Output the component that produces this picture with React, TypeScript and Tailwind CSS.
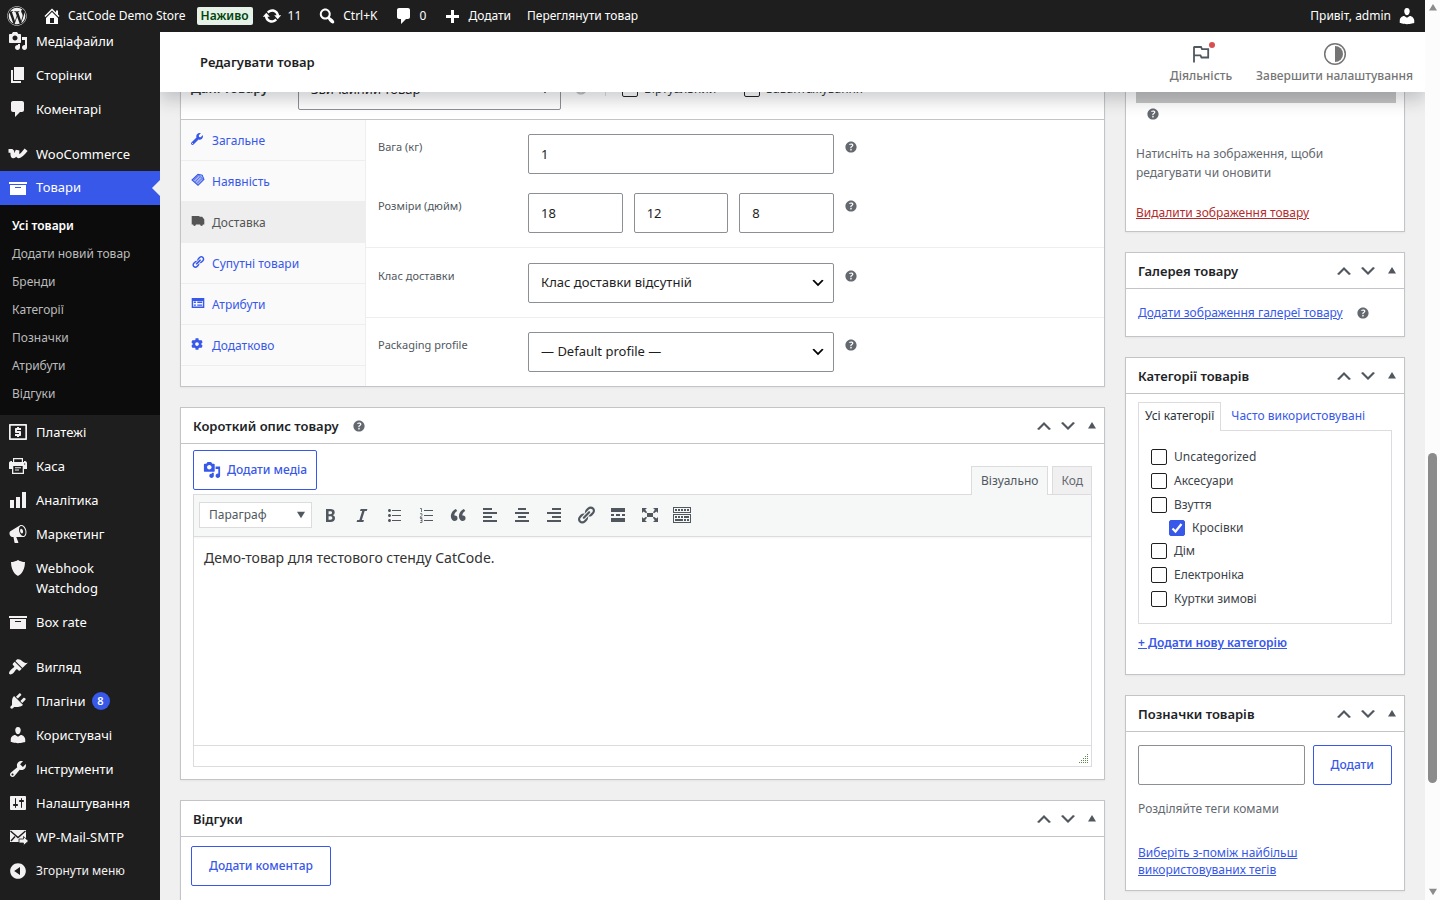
import { useState } from "react";
import type { ReactNode } from "react";
import clsx from "clsx";
import { FaCog, FaWordpress, FaWrench } from "react-icons/fa";

const ICONS = {
  media:
    "M13 11V4c0-.55-.45-1-1-1h-1.67L9 1H5L3.67 3H2c-.55 0-1 .45-1 1v7c0 .55.45 1 1 1h10c.55 0 1-.45 1-1zM7 4.5c1.38 0 2.5 1.12 2.5 2.5S8.38 9.5 7 9.5 4.5 8.38 4.5 7 5.62 4.5 7 4.5zM14 6h5v10.5c0 1.38-1.12 2.5-2.5 2.5S14 17.88 14 16.5s1.12-2.5 2.5-2.5c.17 0 .34.02.5.05V9h-3V6zm-4 8.05V13h2v3.5c0 1.38-1.12 2.5-2.5 2.5S7 17.88 7 16.5 8.12 14 9.5 14c.17 0 .34.02.5.05z",
  page: "M6 15V2h10v13H6zm-1 1h8v2H3V5h2v11z",
  comment:
    "M5 2h9c1.1 0 2 .9 2 2v7c0 1.1-.9 2-2 2h-2l-5 5v-5H5c-1.1 0-2-.9-2-2V4c0-1.1.9-2 2-2z",
  archive: "M19 4v2H1V4h18zM2 7h16v10H2V7zm11 3V9H7v1h6z",
  chart: "M18 18V2h-4v16h4zm-6 0V7H8v11h4zm-6 0v-8H2v8h4z",
  megaphone:
    "M18.15 5.94c.46 1.62.38 3.22-.02 4.48-.42 1.28-1.26 2.18-2.3 2.48-.16.06-.26.06-.4.06-.06.02-.12.02-.18.02-.06.02-.14.02-.22.02h-6.8l2.22 5.5c.02.14-.06.26-.14.34-.08.1-.24.16-.34.16H6.95c-.1 0-.26-.06-.34-.16-.08-.08-.16-.2-.14-.34l-1-5.5H4.25l-.02-.02c-.5.06-1.08-.18-1.54-.62s-.88-1.08-1.06-1.88c-.24-.8-.2-1.56-.02-2.2.18-.62.58-1.08 1.06-1.3l.02-.02 9-5.4c.1-.06.18-.1.24-.16.06-.04.14-.08.24-.12.16-.08.28-.12.5-.18 1.04-.3 2.24.1 3.22.98s1.84 2.24 2.26 3.86zm-2.58 5.98h-.02c.4-.1.74-.34 1.04-.7.58-.7.86-1.76.86-3.04 0-.64-.1-1.3-.28-1.98-.34-1.36-1.02-2.5-1.78-3.24s-1.68-1.1-2.46-.88c-.82.22-1.4.96-1.7 2-.32 1.04-.28 2.36.06 3.72.38 1.36 1 2.5 1.8 3.24.78.74 1.62 1.1 2.48.88zm-2.54-7.08c.22-.04.42-.02.62.04.38.16.76.48 1.02 1s.42 1.2.42 1.78c0 .3-.04.56-.12.8-.18.48-.44.84-.86.94-.34.1-.8-.06-1.14-.4s-.64-.86-.78-1.5c-.18-.62-.12-1.24.02-1.72s.48-.84.82-.94z",
  shield: "M10 2s3 2 7 2c0 11-7 14-7 14S3 15 3 4c4 0 7-2 7-2z",
  brush:
    "M14.48 11.06L7.41 3.99l1.5-1.5c.5-.56 2.3-.47 3.51.32 1.21.8 1.43 1.28 2.91 2.1 1.18.64 2.45 1.26 4.45.85zm-.71.71L6.7 4.7 4.93 6.47c-.39.39-.39 1.02 0 1.41l1.06 1.06c.39.39.39 1.03 0 1.42-.6.6-1.43 1.11-2.21 1.69-.35.26-.7.53-1.01.84C1.43 14.23.4 16.08 1.4 17.07c.99 1 2.84-.03 4.18-1.36.31-.31.58-.66.85-1.02.57-.78 1.08-1.61 1.69-2.21.39-.39 1.02-.39 1.41 0l1.06 1.06c.39.39 1.02.39 1.41 0z",
  plug: "M13.11 4.36L9.87 7.6 8 5.73l3.24-3.24c.35-.34 1.05-.2 1.56.32.52.51.66 1.21.31 1.55zm-8 1.77l.91-1.12 9.01 9.01-1.19.84c-.71.71-2.63 1.16-3.82 1.16H6.14L4.9 17.26c-.59.59-1.54.59-2.12 0-.59-.58-.59-1.53 0-2.12l1.24-1.24v-3.88c0-1.13.4-3.19 1.09-3.89zm7.26 3.97l3.24-3.24c.34-.35 1.04-.21 1.55.31.52.51.66 1.21.31 1.55l-3.24 3.25z",
  user: "M10 9.25c-2.27 0-2.73-3.44-2.73-3.44C7 4.02 7.82 2 9.97 2c2.16 0 2.98 2.02 2.71 3.81 0 0-.41 3.44-2.68 3.44zm0 2.57L12.72 10c2.39 0 4.52 2.33 4.52 4.53v2.49s-3.65 1.13-7.24 1.13c-3.65 0-7.24-1.13-7.24-1.13v-2.49c0-2.25 1.94-4.48 4.47-4.48z",
  tools:
    "M16.68 9.77c-1.34 1.34-3.3 1.67-4.95.99l-5.41 6.52c-.99.99-2.59.99-3.58 0s-.99-2.59 0-3.57l6.52-5.42c-.68-1.65-.35-3.61.99-4.95 1.28-1.28 3.12-1.62 4.72-1.06l-2.89 2.89 2.82 2.82 2.86-2.87c.53 1.58.18 3.39-1.08 4.65zM3.81 16.21c.4.39 1.04.39 1.43 0 .4-.4.4-1.04 0-1.43-.39-.4-1.03-.4-1.43 0-.39.39-.39 1.03 0 1.43z",
  settings:
    "M18 16V4c0-.55-.45-1-1-1H3c-.55 0-1 .45-1 1v12c0 .55.45 1 1 1h14c.55 0 1-.45 1-1zM8 11h1c.55 0 1 .45 1 1s-.45 1-1 1H8v1.5c0 .28-.22.5-.5.5s-.5-.22-.5-.5V13H6c-.55 0-1-.45-1-1s.45-1 1-1h1V5.5c0-.28.22-.5.5-.5s.5.22.5.5V11zm5-2h-1c-.55 0-1-.45-1-1s.45-1 1-1h1V5.5c0-.28.22-.5.5-.5s.5.22.5.5V7h1c.55 0 1 .45 1 1s-.45 1-1 1h-1v5.5c0 .28-.22.5-.5.5s-.5-.22-.5-.5V9z",
  collapse:
    "M10 2.16c4.33 0 7.84 3.51 7.84 7.84s-3.51 7.84-7.84 7.84S2.16 14.33 2.16 10 5.71 2.16 10 2.16zm2 11.72V6.12L6.18 9.97z",
  home: "M16 8.5l1.53 1.53-1.06 1.06L10 4.6l-6.47 6.49-1.06-1.06L10 2.5l4 4v-2h2v4zm-6-2.46l6 5.99V18H4v-5.97zM12 17v-5H8v5h4z",
  update:
    "M10.2 3.28c3.53 0 6.43 2.61 6.92 6h2.08l-3.5 4-3.5-4h2.32c-.45-1.97-2.21-3.45-4.32-3.45-1.45 0-2.73.71-3.54 1.78L4.95 5.66C6.23 4.2 8.11 3.28 10.2 3.28zm-.4 13.44c-3.52 0-6.43-2.61-6.92-6H.8l3.5-4c1.17 1.33 2.33 2.67 3.5 4H5.48c.45 1.97 2.21 3.45 4.32 3.45 1.45 0 2.73-.71 3.54-1.78l1.71 1.95c-1.28 1.46-3.15 2.38-5.25 2.38z",
  search:
    "M12.14 4.18c1.87 1.87 2.11 4.75.72 6.89.12.1.22.21.36.31.2.16.47.36.81.59.34.24.56.39.66.47.42.31.73.57.94.78.32.32.6.65.84 1 .25.35.44.69.59 1.04.14.35.21.68.18 1-.02.32-.14.59-.36.81s-.49.34-.81.36c-.31.02-.65-.04-.99-.19-.35-.14-.7-.34-1.04-.59-.35-.24-.68-.52-1-.84-.21-.21-.47-.52-.77-.93-.1-.13-.25-.35-.47-.66-.22-.32-.4-.57-.56-.78-.16-.2-.29-.35-.44-.5-2.07 1.09-4.69.76-6.44-.98-2.14-2.15-2.14-5.64 0-7.78 2.15-2.15 5.63-2.15 7.78 0zm-1.41 6.36c1.36-1.37 1.36-3.58 0-4.95-1.37-1.37-3.59-1.37-4.95 0-1.37 1.37-1.37 3.58 0 4.95 1.36 1.37 3.58 1.37 4.95 0z",
  plus: "M17 9v3h-5v5H9v-5H4V9h5V4h3v5h5z",
  bold: "M6 4v13h4.54c1.37 0 2.46-.33 3.26-1 .8-.66 1.2-1.58 1.2-2.77 0-.84-.17-1.51-.51-2.01s-.9-.85-1.67-1.03v-.09c.57-.1 1.02-.4 1.36-.9s.51-1.13.51-1.91c0-1.14-.39-1.98-1.17-2.5C12.75 4.26 11.5 4 9.78 4H6zm2.57 5.15V6.26h1.36c.73 0 1.27.11 1.61.32.34.22.51.58.51 1.07 0 .54-.16.92-.47 1.15s-.82.35-1.51.35h-1.5zm0 2.19h1.6c1.44 0 2.16.53 2.16 1.61 0 .6-.17 1.05-.51 1.34s-.86.43-1.57.43H8.57v-3.38z",
  italic: "M14.78 6h-2.13l-2.8 9h2.12l-.62 2H4.6l.62-2h2.14l2.8-9H8.03l.62-2h6.75z",
  ul: "M5.5 7C4.67 7 4 6.33 4 5.5 4 4.68 4.67 4 5.5 4 6.32 4 7 4.68 7 5.5 7 6.33 6.32 7 5.5 7zM8 5h9v1H8V5zm-2.5 7c-.83 0-1.5-.67-1.5-1.5C4 9.68 4.67 9 5.5 9c.82 0 1.5.68 1.5 1.5 0 .83-.68 1.5-1.5 1.5zM8 10h9v1H8v-1zm-2.5 7c-.83 0-1.5-.67-1.5-1.5 0-.82.67-1.5 1.5-1.5.82 0 1.5.68 1.5 1.5 0 .83-.68 1.5-1.5 1.5zM8 15h9v1H8v-1z",
  quote:
    "M9.49 13.22c0-.74-.2-1.38-.61-1.9-.62-.78-1.83-.88-2.53-.72-.29-1.65 1.11-3.75 2.92-4.65L7.88 4c-2.73 1.3-5.42 4.28-4.96 8.05C3.21 14.43 4.59 16 6.54 16c.85 0 1.56-.25 2.12-.75s.83-1.18.83-2.03zm8.05 0c0-.74-.2-1.38-.61-1.9-.63-.78-1.83-.88-2.53-.72-.29-1.65 1.11-3.75 2.92-4.65L15.93 4c-2.73 1.3-5.41 4.28-4.95 8.05.29 2.38 1.66 3.95 3.61 3.95.85 0 1.56-.25 2.12-.75s.83-1.18.83-2.03z",
  alignLeft: "M12 5V3H3v2h9zm5 4V7H3v2h14zm-5 4v-2H3v2h9zm5 4v-2H3v2h14z",
  alignCenter: "M14 5V3H6v2h8zm3 4V7H3v2h14zm-3 4v-2H6v2h8zm3 4v-2H3v2h14z",
  alignRight: "M17 5V3H8v2h9zm0 4V7H3v2h14zm0 4v-2H8v2h9zm0 4v-2H3v2h14z",
  link: "M17.74 2.76c1.68 1.69 1.68 4.41 0 6.1l-1.53 1.52c-1.12 1.12-2.7 1.47-4.14 1.09l2.62-2.61.76-.77.76-.76c.84-.84.84-2.2 0-3.04-.84-.85-2.2-.85-3.04 0l-.77.76-3.38 3.38c-.37-1.44-.02-3.02 1.1-4.14l1.52-1.53c1.69-1.68 4.42-1.68 6.1 0zM8.59 13.43l5.34-5.34c.42-.42.42-1.1 0-1.52-.44-.43-1.13-.39-1.53 0l-5.33 5.34c-.42.42-.42 1.1 0 1.52.44.43 1.13.39 1.52 0zm-.76 2.29l4.14-4.15c.38 1.44.03 3.02-1.09 4.14l-1.52 1.53c-1.69 1.68-4.41 1.68-6.1 0-1.68-1.68-1.68-4.42 0-6.1l1.53-1.52c1.12-1.12 2.7-1.47 4.14-1.1l-4.14 4.15c-.85.84-.85 2.2 0 3.05.84.84 2.2.84 3.04 0z",
  more: "M17 7V3H3v4h14zM6 11V9H3v2h3zm6 0V9H8v2h4zm5 0V9h-3v2h3zm0 6v-4H3v4h14z",
  expand:
    "M7 8h6v4H7zM2 17v-5l1.6 1.6L6 11.8l1 1-2 2.4L7 17zM18 17h-5l1.8-1.8-1.9-2.4 1-1 2.5 1.8L18 12zM18 3v5l-1.6-1.6L14 8.2l-1-1 1.9-2.4L13 3zM2 3h5L5.2 4.8l1.9 2.4-1 1-2.5-1.8L2 8z",
  keyboard:
    "M19 2v6H1V2h18zm-1 5V3H2v4h16zM5 4v2H3V4h2zm3 0v2H6V4h2zm3 0v2H9V4h2zm3 0v2h-2V4h2zm3 0v2h-2V4h2zm2 5v9H1V9h18zm-1 8v-7H2v7h16zM5 11v2H3v-2h2zm3 0v2H6v-2h2zm3 0v2H9v-2h2zm6 0v2h-5v-2h5zm-6 3v2H3v-2h8zm3 0v2h-2v-2h2zm3 0v2h-2v-2h2z",
  help: "M17 10c0-3.87-3.14-7-7-7-3.87 0-7 3.13-7 7s3.13 7 7 7c3.86 0 7-3.13 7-7zm-6.3 1.48H9.14v-.43c0-.38.08-.7.24-.98s.46-.57.88-.89c.41-.29.68-.53.81-.71.14-.18.2-.39.2-.62 0-.25-.09-.44-.28-.58-.19-.13-.45-.19-.79-.19-.58 0-1.25.15-2 .46l-.64-1.28c.87-.49 1.8-.74 2.77-.74.81 0 1.45.2 1.92.58.48.39.71.91.71 1.55 0 .43-.09.8-.29 1.11-.19.32-.57.67-1.11 1.06-.38.28-.61.49-.71.63-.1.15-.15.34-.15.57v.46zm-1.47 2.74c-.18-.17-.27-.42-.27-.73 0-.33.08-.58.26-.75s.43-.25.77-.25c.32 0 .57.09.75.26s.27.42.27.74c0 .3-.09.55-.27.72-.18.18-.43.27-.75.27-.33 0-.58-.09-.76-.26z",
  up: "M15 14l-5-5-5 5-2-1 7-7 7 7z",
  down: "M5 6l5 5 5-5 2 1-7 7-7-7z",
  triangle: "M5 13h10l-5-8z",
  triangleDown: "M5 6h10l-5 8z",
  truck: "M1 3h11v1h4l3 4v7h-2a2 2 0 0 1-4 0H7a2 2 0 0 1-4 0H1z",
  list: "M1 3h18v14H1V3zm2 4v8h14V7H3zm1 1h3v2H4V8zm5 0h7v2H9V8zm-5 4h3v2H4v-2zm5 0h7v2H9v-2z",
  money:
    "M2 2h16c.6 0 1 .4 1 1v14c0 .6-.4 1-1 1H2c-.6 0-1-.4-1-1V3c0-.6.4-1 1-1zm.7 1.7v12.600h14.600V3.700zM9 5h2v1h2v2H9v1h3c.6 0 1 .4 1 1v3c0 .6-.4 1-1 1h-1v1H9v-1H7v-2h4v-1H8c-.6 0-1-.4-1-1V7c0-.6.4-1 1-1h1z",
  printer:
    "M5 2h10v4h1V5h1c1 0 2 1 2 2v6h-3v5H4v-5H1V7c0-1 1-2 2-2h1v1h1zm1.200 1.200V6h7.600V3.200zM5.300 10v6.800h9.400V10zM7 11.300h6v1H7zm0 2.200h4v1H7zM16 7.500v1h1.200v-1z",
};

type IconName = keyof typeof ICONS;

function Icon({ name, className = "size-5" }: { name: IconName; className?: string }) {
  return (
    <svg viewBox="0 0 20 20" className={clsx("shrink-0 fill-current", className)} fillRule="evenodd" aria-hidden="true">
      <path d={ICONS[name]} />
    </svg>
  );
}

function WooIcon() {
  return (
    <svg viewBox="0 0 20 20" className="size-5 shrink-0" fill="none" stroke="currentColor" aria-hidden="true">
      <path d="M.5 6.800h3.800c.1 1.800-.4 5.300.8 5.500 1.500.2 3.500-3 4.500-6-.4 2.500-.4 5.800 1 6 2 .2 4.900-3.300 7.500-6.600" strokeWidth="3.800" strokeLinejoin="bevel" />
    </svg>
  );
}

function MailIcon() {
  return (
    <svg viewBox="0 0 20 20" className="size-5 shrink-0" fill="none" aria-hidden="true">
      <path d="M2 3h16v12H2z" fill="#f3f1f1" />
      <path d="M2.500 4l7.500 6.500L17.500 4M3 14l4-4.500" stroke="#1e1e1e" strokeWidth="1.400" />
      <path d="M11 12h4.500V9.500l5 4.500-5 4.500V16H11z" fill="#f3f1f1" stroke="#1e1e1e" strokeWidth=".8" />
    </svg>
  );
}

function TagIcon() {
  return (
    <svg viewBox="0 0 20 20" className="size-3.5 shrink-0" fill="none" stroke="currentColor" aria-hidden="true">
      <path d="M1.500 10L10 2l6 1 2.500 6-8.500 8.500z" fill="currentColor" fillOpacity=".45" strokeWidth="1.500" />
      <path d="M4 10l6-6M6 12.500l6.500-6.500M8.500 15l7-7M11 3l7 7" strokeWidth="1" />
    </svg>
  );
}

function OrderedListIcon() {
  return (
    <svg viewBox="0 0 20 20" className="size-5" fill="none" stroke="currentColor" aria-hidden="true">
      <path d="M8 5.500h9M8 10.500h9M8 15.500h9" />
      <path d="M4 3.500h1.500V7M4 8.700h2v1.600l-2 2h2.300M4 13.500h2v4H4M4.500 15.500H6" strokeWidth=".8" />
    </svg>
  );
}

const topMenu: { label: string; icon: ReactNode }[] = [
  { label: "Медіафайли", icon: <Icon name="media" /> },
  { label: "Сторінки", icon: <Icon name="page" /> },
  { label: "Коментарі", icon: <Icon name="comment" /> },
];

const shopMenu: { label: string; icon: ReactNode }[] = [
  { label: "Платежі", icon: <Icon name="money" /> },
  { label: "Каса", icon: <Icon name="printer" /> },
  { label: "Аналітика", icon: <Icon name="chart" /> },
  { label: "Маркетинг", icon: <Icon name="megaphone" /> },
  { label: "Webhook Watchdog", icon: <Icon name="shield" /> },
  { label: "Box rate", icon: <Icon name="archive" /> },
];

const adminMenu: { label: string; icon: ReactNode; badge?: number }[] = [
  { label: "Вигляд", icon: <Icon name="brush" /> },
  { label: "Плагіни", icon: <Icon name="plug" />, badge: 8 },
  { label: "Користувачі", icon: <Icon name="user" /> },
  { label: "Інструменти", icon: <Icon name="tools" /> },
  { label: "Налаштування", icon: <Icon name="settings" /> },
  { label: "WP-Mail-SMTP", icon: <MailIcon /> },
];

const productSubmenu = ["Додати новий товар", "Бренди", "Категорії", "Позначки", "Атрибути", "Відгуки"];

const productTabs: { label: string; icon: ReactNode; active?: boolean }[] = [
  { label: "Загальне", icon: <FaWrench className="size-3" /> },
  { label: "Наявність", icon: <TagIcon /> },
  { label: "Доставка", icon: <Icon name="truck" className="size-3.5" />, active: true },
  { label: "Супутні товари", icon: <Icon name="link" className="size-3.5" /> },
  { label: "Атрибути", icon: <Icon name="list" className="size-3.5" /> },
  { label: "Додатково", icon: <FaCog className="size-3" /> },
];

const categories = [
  { label: "Uncategorized" },
  { label: "Аксесуари" },
  { label: "Взуття" },
  { label: "Кросівки", child: true, checked: true },
  { label: "Дім" },
  { label: "Електроніка" },
  { label: "Куртки зимові" },
];

const toolbar: { label: string; icon: ReactNode }[] = [
  { label: "Жирний", icon: <Icon name="bold" /> },
  { label: "Курсив", icon: <Icon name="italic" /> },
  { label: "Маркований список", icon: <Icon name="ul" /> },
  { label: "Нумерований список", icon: <OrderedListIcon /> },
  { label: "Цитата", icon: <Icon name="quote" /> },
  { label: "Ліворуч", icon: <Icon name="alignLeft" /> },
  { label: "По центру", icon: <Icon name="alignCenter" /> },
  { label: "Праворуч", icon: <Icon name="alignRight" /> },
  { label: "Посилання", icon: <Icon name="link" /> },
  { label: "Далі", icon: <Icon name="more" /> },
  { label: "На весь екран", icon: <Icon name="expand" /> },
  { label: "Панель інструментів", icon: <Icon name="keyboard" /> },
];

function MenuItem({ label, icon, badge }: { label: string; icon: ReactNode; badge?: number }) {
  return (
    <li>
      <a href="#" className="flex items-start gap-2 px-2 py-[7px] text-[#f3f1f1]">
        {icon}
        <span className="leading-5 text-white">{label}</span>
        {badge && (
          <span className="-ml-0.5 mt-px flex size-[18px] items-center justify-center rounded-full bg-[#3858e9] text-[11px] font-semibold text-white">
            {badge}
          </span>
        )}
      </a>
    </li>
  );
}

function Sidebar() {
  return (
    <nav className="w-40 shrink-0 overflow-hidden bg-[#1e1e1e] text-[13px]">
      <ul className="-mt-2">
        {topMenu.map((item) => (
          <MenuItem key={item.label} {...item} />
        ))}
      </ul>
      <ul className="mt-[11px]">
        <MenuItem label="WooCommerce" icon={<WooIcon />} />
        <li>
          <a href="#" className="relative flex h-[34px] items-center gap-2 bg-[#3858e9] px-2 text-white">
            <Icon name="archive" />
            <span>Товари</span>
            <span className="absolute top-1/2 right-0 -mt-2 border-8 border-transparent border-r-[#f0f0f0]" />
          </a>
          <ul className="bg-[#0c0c0c] py-[7px] text-xs text-[#bbb]">
            <li>
              <a href="#" className="flex h-7 items-center px-3 font-semibold text-white">
                Усі товари
              </a>
            </li>
            {productSubmenu.map((label) => (
              <li key={label}>
                <a href="#" className="flex h-7 items-center px-3">
                  {label}
                </a>
              </li>
            ))}
          </ul>
        </li>
        {shopMenu.map((item) => (
          <MenuItem key={item.label} {...item} />
        ))}
      </ul>
      <ul className="mt-[11px]">
        {adminMenu.map((item) => (
          <MenuItem key={item.label} {...item} />
        ))}
        <li>
          <button type="button" className="flex h-[34px] items-center gap-2 px-2 text-xs text-[#f3f1f1]">
            <Icon name="collapse" />
            Згорнути меню
          </button>
        </li>
      </ul>
    </nav>
  );
}

function AdminBar() {
  return (
    <header className="flex h-8 shrink-0 items-center bg-[#1e1e1e] pr-2 pl-[7px] text-xs text-white">
      <a href="#" aria-label="WordPress">
        <FaWordpress className="size-5 text-[#f3f1f1]" />
      </a>
      <a href="#" className="ml-[15px] flex items-center gap-1.5">
        <Icon name="home" />
        CatCode Demo Store
      </a>
      <a href="#" className="ml-[11px] flex h-[18px] items-center rounded-xs bg-[#e6f2e8] px-1 font-semibold text-[#00450c]">
        Наживо
      </a>
      <a href="#" className="ml-[9px] flex items-center gap-1.5">
        <Icon name="update" />
        11
      </a>
      <button type="button" className="ml-4 flex items-center gap-1.5">
        <Icon name="search" />
        Ctrl+K
      </button>
      <a href="#" className="ml-4 flex items-center gap-1.5">
        <Icon name="comment" />0
      </a>
      <a href="#" className="ml-4 flex items-center gap-1.5">
        <Icon name="plus" />
        Додати
      </a>
      <a href="#" className="ml-4">
        Переглянути товар
      </a>
      <a href="#" className="ml-auto flex items-center gap-1.5">
        Привіт, admin
        <Icon name="user" />
      </a>
    </header>
  );
}

function HelpTip({ className }: { className?: string }) {
  return (
    <span title="Довідка" className={clsx("flex text-[#646970]", className)}>
      <Icon name="help" className="size-4" />
    </span>
  );
}

function BoxActions({ className }: { className?: string }) {
  return (
    <span className={clsx("ml-auto flex items-center text-[#50575e]", className)}>
      <button type="button" aria-label="Вгору" className="flex w-6 justify-center">
        <Icon name="up" />
      </button>
      <button type="button" aria-label="Вниз" className="flex w-6 justify-center">
        <Icon name="down" />
      </button>
      <button type="button" aria-label="Згорнути" className="flex w-6 justify-center">
        <Icon name="triangle" className="size-4" />
      </button>
    </span>
  );
}

function Box({ title, help, children }: { title: string; help?: boolean; children: ReactNode }) {
  return (
    <section className="border border-[#c3c4c7] bg-white shadow-xs">
      <div className="flex h-9 items-center border-b border-[#c3c4c7] pl-3">
        <h2 className="pt-0.5 text-[13px] font-semibold text-[#1d2327]">{title}</h2>
        {help && <HelpTip className="ml-3" />}
        <BoxActions />
      </div>
      {children}
    </section>
  );
}

const inputStyle =
  "h-10 w-full min-w-0 rounded-xs border border-[#8c8f94] bg-white px-3 text-[13px] text-[#1e1e1e]";

function SelectBox({ id, option }: { id: string; option: string }) {
  return (
    <span className="relative block">
      <select id={id} className={clsx(inputStyle, "appearance-none pr-8")}>
        <option>{option}</option>
      </select>
      <Icon name="down" className="pointer-events-none absolute top-3 right-2 size-4" />
    </span>
  );
}

function Field({ id, label, children }: { id: string; label: string; children: ReactNode }) {
  return (
    <div className="flex items-start px-3">
      <label htmlFor={id} className="w-[150px] shrink-0 py-1 text-[11px] leading-[18px] text-[#50575e]">
        {label}
      </label>
      <div className="w-[306px]">{children}</div>
      <HelpTip className="mt-[5px] ml-[9px]" />
    </div>
  );
}

function ProductData() {
  return (
    <section className="border border-[#c3c4c7] bg-white shadow-xs">
      <div className="flex h-[59px] items-center border-b border-[#c3c4c7] pl-2.5 text-xs text-[#2c3338]">
        <h2 className="mb-0.5 w-[107px] shrink-0 text-[13px] font-semibold">Дані товару</h2>
        <div className="w-[263px]">
          <label htmlFor="product-type" className="sr-only">
            Тип товару
          </label>
          <SelectBox id="product-type" option="Звичайний товар" />
        </div>
        <HelpTip className="mb-0.5 ml-3 opacity-40" />
        <span className="mb-1 ml-4 h-4 border-l border-[#dcdcde]" />
        <label className="mb-0.5 ml-4 flex items-center gap-1.5">
          <input type="checkbox" className="size-4 appearance-none rounded-xs border border-[#1e1e1e] bg-white" />
          Віртуальний
        </label>
        <label className="mb-0.5 ml-7 flex items-center gap-1.5">
          <input type="checkbox" className="size-4 appearance-none rounded-xs border border-[#1e1e1e] bg-white" />
          Завантажування
        </label>
        <BoxActions className="mb-1" />
      </div>
      <div className="flex">
        <ul className="w-[185px] shrink-0 border-r border-[#eee] bg-[#fafafa] text-xs">
          {productTabs.map((tab) => (
            <li key={tab.label} className="border-b border-[#eee]">
              <a
                href="#"
                className={clsx(
                  "flex h-10 items-center gap-1 px-2.5 pt-0.5",
                  tab.active ? "bg-[#eee] text-[#555]" : "text-[#3858e9]"
                )}
              >
                <span className="mb-1 flex w-[17px]">{tab.icon}</span>
                {tab.label}
              </a>
            </li>
          ))}
        </ul>
        <div className="flex-1">
          <div className="space-y-[19px] border-b border-[#eee] py-3.5">
            <Field id="weight" label="Вага (кг)">
              <input id="weight" defaultValue="1" className={inputStyle} />
            </Field>
            <Field id="length" label="Розміри (дюйм)">
              <div className="flex gap-[11px]">
                <input id="length" aria-label="Довжина" defaultValue="18" className={inputStyle} />
                <input aria-label="Ширина" defaultValue="12" className={inputStyle} />
                <input aria-label="Висота" defaultValue="8" className={inputStyle} />
              </div>
            </Field>
          </div>
          <div className="border-b border-[#eee] pt-[15px] pb-3.5">
            <Field id="shipping-class" label="Клас доставки">
              <SelectBox id="shipping-class" option="Клас доставки відсутній" />
            </Field>
          </div>
          <div className="py-3.5">
            <Field id="packaging" label="Packaging profile">
              <SelectBox id="packaging" option="— Default profile —" />
            </Field>
          </div>
        </div>
      </div>
    </section>
  );
}

function ShortDescription() {
  return (
    <Box title="Короткий опис товару" help>
      <div className="px-3 pt-1.5 pb-3">
        <div className="flex items-start justify-between">
          <button
            type="button"
            className="mb-1 flex h-10 items-center gap-1.5 rounded-xs border border-[#3858e9] px-[9px] text-xs font-medium text-[#3858e9]"
          >
            <Icon name="media" className="size-[18px]" />
            Додати медіа
          </button>
          <div className="relative -mb-px flex gap-1 self-end text-xs text-[#50575e]">
            <button type="button" className="h-[29px] border border-b-0 border-[#dcdcde] bg-[#f6f7f7] px-[9px]">
              Візуально
            </button>
            <button type="button" className="h-[29px] border border-[#dcdcde] bg-[#f0f0f1] px-2 text-[#646970]">
              Код
            </button>
          </div>
        </div>
        <div className="border border-[#dcdcde]">
          <div className="flex h-[42px] items-center border-b border-[#dcdcde] bg-[#f6f7f7] px-[5px] pb-0.5 text-[#50575e] shadow-xs">
            <button type="button" className="mr-0.5 flex h-[26px] w-[113px] items-center justify-between border border-[#dcdcde] bg-white pr-0.5 pl-[9px] text-xs">
              Параграф
              <Icon name="triangleDown" className="size-4" />
            </button>
            {toolbar.map((tool) => (
              <button key={tool.label} type="button" aria-label={tool.label} className="flex w-8 justify-center">
                {tool.icon}
              </button>
            ))}
          </div>
          <div className="h-[208px] px-2.5 py-[11px] text-sm leading-5 text-[#333]">
            Демо-товар для тестового стенду CatCode.
          </div>
          <div className="flex h-[21px] items-end justify-end border-t border-[#dcdcde] p-0.5">
            <svg viewBox="0 0 10 10" className="size-2.5 fill-[#5d8a4d]" aria-hidden="true">
              <path d="M8 0h1v1H8zM8 2h1v1H8zM6 2h1v1H6zM8 4h1v1H8zM6 4h1v1H6zM4 4h1v1H4zM8 6h1v1H8zM6 6h1v1H6zM4 6h1v1H4zM2 6h1v1H2zM8 8h1v1H8zM6 8h1v1H6zM4 8h1v1H4zM2 8h1v1H2zM0 8h1v1H0z" />
            </svg>
          </div>
        </div>
      </div>
    </Box>
  );
}

function CategoryItem({ label, child, checked = false }: { label: string; child?: boolean; checked?: boolean }) {
  const [on, setOn] = useState(checked);
  return (
    <li className={clsx("flex items-center", child ? "ml-[18px] h-[22px]" : "h-6")}>
      <label className="flex items-center gap-[7px]">
        <span className="relative flex">
          <input
            type="checkbox"
            checked={on}
            onChange={() => setOn(!on)}
            className="size-4 appearance-none rounded-xs border border-[#1e1e1e] bg-white checked:border-[#3858e9] checked:bg-[#3858e9]"
          />
          {on && (
            <svg viewBox="0 0 16 16" className="pointer-events-none absolute inset-0 size-4" fill="none" stroke="#fff" strokeWidth="2.200" aria-hidden="true">
              <path d="M3.500 8.500l3 3 6-7.500" />
            </svg>
          )}
        </span>
        {label}
      </label>
    </li>
  );
}

function SideColumn() {
  return (
    <aside className="w-[280px] shrink-0 space-y-5 text-xs text-[#3c434a]">
      <section className="border border-[#c3c4c7] bg-white px-2.5 pb-[9px] shadow-xs">
        <div className="h-[42px] w-[260px] bg-[#c4c4c4]" />
        <HelpTip className="mt-[3px] ml-[9px]" />
        <p className="mt-[22px] leading-[19px] text-[#646970]">
          Натисніть на зображення, щоби
          <br />
          редагувати чи оновити
        </p>
        <a href="#" className="mt-[21px] block leading-[19px] text-[#b32d2e] underline">
          Видалити зображення товару
        </a>
      </section>

      <Box title="Галерея товару">
        <div className="flex h-[47px] items-center gap-3 px-3">
          <a href="#" className="text-[#3858e9] underline">
            Додати зображення галереї товару
          </a>
          <HelpTip />
        </div>
      </Box>

      <Box title="Категорії товарів">
        <div className="px-3 pt-2 pb-[21px]">
          <div className="relative -mb-px flex">
            <button type="button" className="h-[29px] border border-b-0 border-[#dcdcde] bg-white px-1.5 pb-0.5 text-[#2c3338]">
              Усі категорії
            </button>
            <button type="button" className="px-2.5 pb-0.5 text-[#3858e9]">
              Часто використовувані
            </button>
          </div>
          <ul className="border border-[#dcdcde] px-3 pt-3.5 pb-3">
            {categories.map((category) => (
              <CategoryItem key={category.label} {...category} />
            ))}
          </ul>
          <a href="#" className="mt-[9px] block leading-5 font-semibold text-[#3858e9] underline">
            + Додати нову категорію
          </a>
        </div>
      </Box>

      <Box title="Позначки товарів">
        <div className="px-3 pt-[13px] pb-3">
          <div className="flex gap-2">
            <input aria-label="Нова позначка" className={inputStyle} />
            <button type="button" className="h-10 shrink-0 rounded-xs border border-[#3858e9] px-[17px] font-medium text-[#3858e9]">
              Додати
            </button>
          </div>
          <p className="mt-3.5 leading-[19px] text-[#646970]">Розділяйте теги комами</p>
          <a href="#" className="mt-[26px] block leading-[17px] text-[#3858e9] underline">
            Виберіть з-поміж найбільш використовуваних тегів
          </a>
        </div>
      </Box>
    </aside>
  );
}

function PageHeader() {
  return (
    <div className="relative z-10 flex h-[60px] shrink-0 items-center bg-white pt-0.5 pr-3 pl-10 shadow-[0_8px_16px_rgba(30,35,45,0.22)]">
      <h1 className="text-[13px] font-semibold text-[#1e1e1e]">Редагувати товар</h1>
      <div className="ml-auto flex gap-6 text-xs font-medium text-[#757575]">
        <button type="button" className="flex flex-col items-center gap-0.5">
          <span className="relative">
            <svg viewBox="0 0 24 24" className="size-6" fill="none" stroke="#50575e" strokeWidth="1.800" aria-hidden="true">
              <path d="M5 20.500V4.500M5 5h7l1 2.200h6.200v8.300h-6.700l-1-2.200H5" />
            </svg>
            <span className="absolute top-0 -right-0.5 size-1.5 rounded-full bg-[#d94f4f]" />
          </span>
          Діяльність
        </button>
        <button type="button" className="flex flex-col items-center gap-0.5">
          <svg viewBox="0 0 24 24" className="size-6" aria-hidden="true">
            <circle cx="12" cy="12" r="10.300" fill="none" stroke="#757575" strokeWidth="1.500" />
            <path d="M12 4a8 8 0 0 1 0 16z" fill="#757575" />
          </svg>
          Завершити налаштування
        </button>
      </div>
    </div>
  );
}

function ScrollTrack() {
  return (
    <div className="flex w-[15px] shrink-0 flex-col items-center bg-[#fcfcfc] text-[#8b8b8b]" aria-hidden="true">
      <Icon name="triangle" className="size-4" />
      <div className="flex min-h-0 flex-1 flex-col">
        <div className="flex-[437]" />
        <div className="w-[9px] flex-[330] rounded-full bg-[#8b8b8b]" />
        <div className="flex-[101]" />
      </div>
      <Icon name="triangleDown" className="size-4" />
    </div>
  );
}

export default function App() {
  return (
    <div className="flex h-screen overflow-hidden bg-[#f0f0f0] font-['Noto_Sans',sans-serif]">
      <div className="flex min-w-0 flex-1 flex-col">
        <AdminBar />
        <div className="flex min-h-0 flex-1">
          <Sidebar />
          <main className="flex min-w-0 flex-1 flex-col overflow-hidden">
            <PageHeader />
            <div className="-mt-8 flex items-start gap-5 px-5">
              <div className="min-w-0 flex-1 space-y-5">
                <ProductData />
                <ShortDescription />
                <Box title="Відгуки">
                  <div className="px-2.5 pt-[9px] pb-5">
                    <button type="button" className="h-10 rounded-xs border border-[#3858e9] px-[17px] text-xs font-medium text-[#3858e9]">
                      Додати коментар
                    </button>
                  </div>
                </Box>
              </div>
              <SideColumn />
            </div>
          </main>
        </div>
      </div>
      <ScrollTrack />
    </div>
  );
}
